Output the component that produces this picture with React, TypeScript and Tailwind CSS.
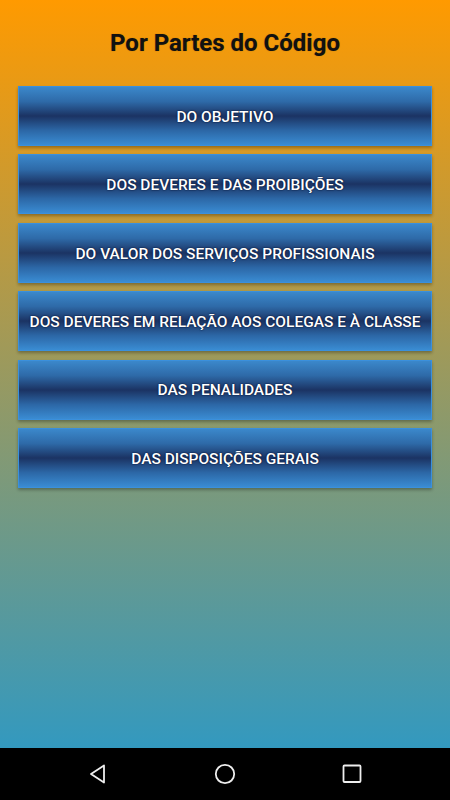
import React from "react";

const sections = [
  "DO OBJETIVO",
  "DOS DEVERES E DAS PROIBIÇÕES",
  "DO VALOR DOS SERVIÇOS PROFISSIONAIS",
  "DOS DEVERES EM RELAÇÃO AOS COLEGAS E À CLASSE",
  "DAS PENALIDADES",
  "DAS DISPOSIÇÕES GERAIS",
];

function NavBar() {
  return (
    <div className="flex h-[52px] shrink-0 items-center justify-between bg-black px-[86px]">
      <svg width="24" height="24" viewBox="0 0 24 24" fill="none" stroke="#eee" strokeWidth="1.8" strokeLinejoin="round">
        <path d="M18 3.5 L5 12 L18 20.5 Z" />
      </svg>
      <svg width="24" height="24" viewBox="0 0 24 24" fill="none" stroke="#eee" strokeWidth="1.8">
        <circle cx="12" cy="12" r="9.2" />
      </svg>
      <svg width="24" height="24" viewBox="0 0 24 24" fill="none" stroke="#eee" strokeWidth="1.8">
        <rect x="3.5" y="3.5" width="17" height="16.5" rx="1" />
      </svg>
    </div>
  );
}

export default function App() {
  return (
    <div className="flex h-[800px] w-[450px] flex-col overflow-hidden font-['Roboto',sans-serif]">
      <div className="flex flex-1 flex-col bg-[linear-gradient(180deg,#ff9a00_0%,#3399bf_100%)] px-[18px]">
        <h1 className="mt-[28px] text-center text-[24px] font-bold leading-[30px] text-[#111] [text-shadow:0_0_1px_rgba(0,0,0,0.4)]">
          Por Partes do Código
        </h1>
        <div className="mt-[28px] flex flex-col gap-[8.4px]">
          {sections.map((label) => (
            <button
              key={label}
              type="button"
              className="flex h-[60px] w-full items-center justify-center border border-[#3b90dc] bg-[linear-gradient(180deg,#3b88cb_0%,#2e6aa8_25%,#1b3363_50%,#2c67a6_75%,#3a8cd3_100%)] pt-[3px] text-[15.5px] font-medium text-white shadow-[0_2px_3px_rgba(0,0,0,0.3)] [text-shadow:0_0_2px_#0a1a3d,0_0_1px_#0a1a3d]"
            >
              {label}
            </button>
          ))}
        </div>
      </div>
      <NavBar />
    </div>
  );
}
